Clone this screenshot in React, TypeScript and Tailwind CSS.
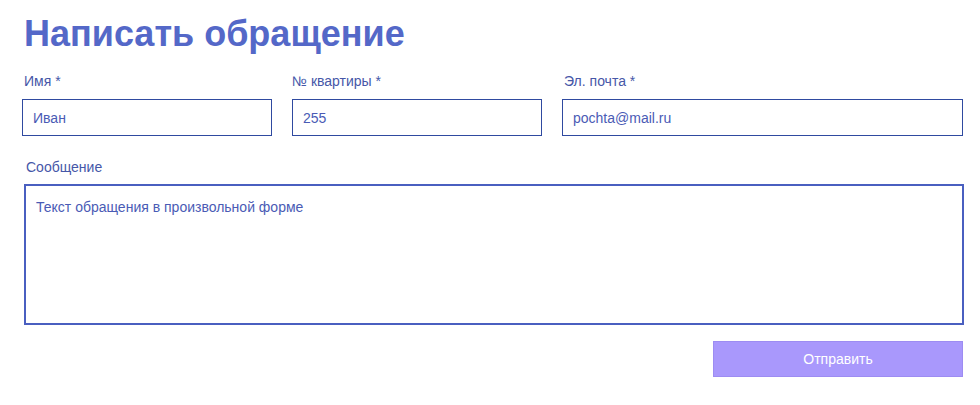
import React, { useEffect, useRef, useState } from "react";

const FONT = { fontFamily: '"Liberation Sans", Arial, sans-serif' };

const App: React.FC = () => {
  const [name, setName] = useState("Иван");
  const [flat, setFlat] = useState("255");
  const [email, setEmail] = useState("pochta@mail.ru");
  const [message, setMessage] = useState("Текст обращения в произвольной форме");
  const areaRef = useRef<HTMLTextAreaElement>(null);

  useEffect(() => {
    const el = areaRef.current;
    if (el) {
      el.focus();
      el.setSelectionRange(el.value.length, el.value.length);
    }
  }, []);

  return (
    <div className="w-[980px] h-[405px] bg-white" style={FONT}>
      <div className="pl-[22px] pr-[17px] pt-[12px]">
        <h1 className="pl-[2px] text-[36px] leading-[44px] font-bold text-[#5468c8]">
          Написать обращение
        </h1>

        <div className="mt-[17px] flex gap-5">
          <div className="w-[250px]">
            <label className="block pl-[2px] text-[14px] leading-[16px] text-[#4657a8]">Имя *</label>
            <input
              value={name}
              onChange={(e) => setName(e.target.value)}
              className="mt-[10px] w-full h-[37px] px-[10px] border border-[#2f4aa0] text-[14px] text-[#4a5bb5] outline-none"
            />
          </div>
          <div className="w-[250px]">
            <label className="block text-[14px] leading-[16px] text-[#4657a8]">№ квартиры *</label>
            <input
              value={flat}
              onChange={(e) => setFlat(e.target.value)}
              className="mt-[10px] w-full h-[37px] px-[10px] border border-[#2f4aa0] text-[14px] text-[#4a5bb5] outline-none"
            />
          </div>
          <div className="w-[401px]">
            <label className="block pl-[2px] text-[14px] leading-[16px] text-[#4657a8]">Эл. почта *</label>
            <input
              value={email}
              onChange={(e) => setEmail(e.target.value)}
              className="mt-[10px] w-full h-[37px] px-[10px] border border-[#2f4aa0] text-[14px] text-[#4a5bb5] outline-none"
            />
          </div>
        </div>

        <div className="mt-[23px] pl-[2px]">
          <label className="block pl-[2px] text-[14px] leading-[16px] text-[#4657a8]">Сообщение</label>
          <textarea
            ref={areaRef}
            value={message}
            onChange={(e) => setMessage(e.target.value)}
            className="mt-[9px] block w-[940px] h-[141px] px-[10px] py-[10px] border-2 border-[#4a5fc0] text-[14px] leading-[22px] text-[#4a5bb5] caret-[#2f3a80] resize-none outline-none"
          />
        </div>

        <div className="mt-[16px] flex justify-end">
          <button className="w-[250px] h-[36px] bg-[#a998fc] text-white text-[14px] border border-[#9d8cf2]">
            Отправить
          </button>
        </div>
      </div>
    </div>
  );
};

export default App;
